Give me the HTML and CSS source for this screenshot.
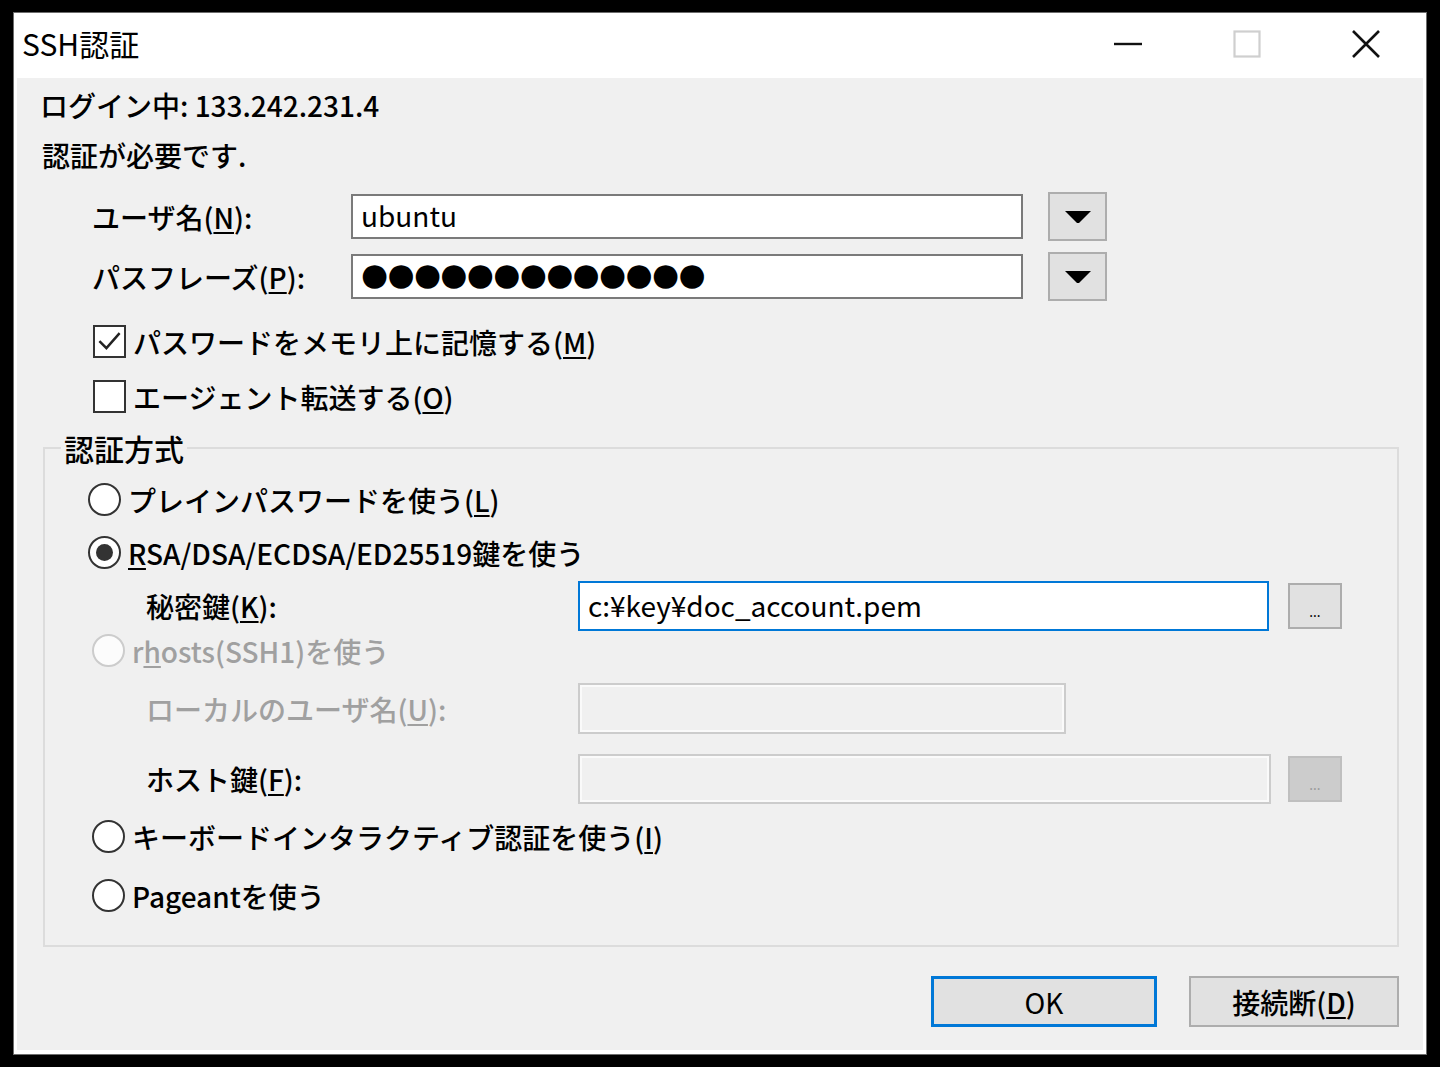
FILE: index.html
```html
<!DOCTYPE html>
<html lang="ja">
<head>
    <meta charset="UTF-8">
    <meta name="viewport" content="width=device-width, initial-scale=1.0">
    <title>SSH認証</title>
    <link rel="stylesheet" href="styles.css">
</head>
<body>
    <div class="window">
        <div class="titlebar">
            <span class="title">SSH認証</span>
            <div class="caption-btns">
                <svg class="cap-icon" viewBox="0 0 28 28"><line x1="0" y1="14" x2="28" y2="14" stroke="#111" stroke-width="2.4"/></svg>
                <svg class="cap-icon" viewBox="0 0 28 28"><rect x="1.5" y="1.5" width="25" height="25" fill="none" stroke="#cfcfcf" stroke-width="2.2"/></svg>
                <svg class="cap-icon" viewBox="0 0 28 28"><path d="M1 1 L27 27 M27 1 L1 27" stroke="#111" stroke-width="2.6" fill="none"/></svg>
            </div>
        </div>

        <div class="client">
            <p class="info">ログイン中: 133.242.231.4</p>
            <p class="info info-second">認証が必要です.</p>

            <div class="field-row row-user">
                <span class="field-label">ユーザ名(<u>N</u>):</span>
                <div class="edit edit-main">ubuntu</div>
                <button class="drop-btn">
                    <svg viewBox="0 0 28 14" width="28" height="14"><path d="M1 1 L27 1 L15 13 L13 13 Z" fill="#000"/></svg>
                </button>
            </div>
            <div class="field-row row-pass">
                <span class="field-label">パスフレーズ(<u>P</u>):</span>
                <div class="edit edit-main"><span class="dots">●●●●●●●●●●●●●</span></div>
                <button class="drop-btn">
                    <svg viewBox="0 0 28 14" width="28" height="14"><path d="M1 1 L27 1 L15 13 L13 13 Z" fill="#000"/></svg>
                </button>
            </div>

            <div class="check-row check-first">
                <span class="checkbox">
                    <svg viewBox="0 0 33 33" width="31" height="31"><path d="M5 16 L13 24 L28 7" fill="none" stroke="#222" stroke-width="2.8"/></svg>
                </span>
                <span class="opt-label">パスワードをメモリ上に記憶する(<u>M</u>)</span>
            </div>
            <div class="check-row check-second">
                <span class="checkbox"></span>
                <span class="opt-label">エージェント転送する(<u>O</u>)</span>
            </div>

            <fieldset class="group">
                <legend class="group-title">認証方式</legend>

                <div class="radio-row radio-plain">
                    <span class="radio"></span>
                    <span class="opt-label">プレインパスワードを使う(<u>L</u>)</span>
                </div>
                <div class="radio-row radio-rsa">
                    <span class="radio checked"></span>
                    <span class="opt-label"><u>R</u>SA/DSA/ECDSA/ED25519鍵を使う</span>
                </div>
                <div class="sub-row row-key">
                    <span class="sub-label">秘密鍵(<u>K</u>):</span>
                    <div class="edit edit-focus">c:¥key¥doc_account.pem</div>
                    <button class="browse-btn">...</button>
                </div>

                <div class="radio-row radio-late radio-rhosts">
                    <span class="radio disabled"></span>
                    <span class="opt-label text-disabled">r<u>h</u>osts(SSH1)を使う</span>
                </div>
                <div class="sub-row row-local">
                    <span class="sub-label text-disabled">ローカルのユーザ名(<u>U</u>):</span>
                    <div class="edit edit-disabled edit-local"></div>
                </div>
                <div class="sub-row row-host">
                    <span class="sub-label">ホスト鍵(<u>F</u>):</span>
                    <div class="edit edit-disabled edit-host"></div>
                    <button class="browse-btn browse-disabled">...</button>
                </div>

                <div class="radio-row radio-late radio-kbd">
                    <span class="radio"></span>
                    <span class="opt-label">キーボードインタラクティブ認証を使う(<u>I</u>)</span>
                </div>
                <div class="radio-row radio-late radio-pageant">
                    <span class="radio"></span>
                    <span class="opt-label">Pageantを使う</span>
                </div>
            </fieldset>

            <div class="dialog-btns">
                <button class="push-btn push-default">OK</button>
                <button class="push-btn push-cancel">接続断(<u>D</u>)</button>
            </div>
        </div>
    </div>
</body>
</html>
```

FILE: styles.css
```css
body {
    margin: 0;
    padding: 12px 13px;
    background-color: #000;
    font-family: "Noto Sans CJK JP", "Noto Sans", sans-serif;
    font-size: 28px;
    font-weight: 500;
    color: #000;
}

.window {
    box-sizing: border-box;
    width: 1414px;
    height: 1043px;
    background: #fff;
    border: 1px solid #6d6d6d;
    padding: 0 3px 4px 3px;
    display: flex;
    flex-direction: column;
}

/* タイトルバー */
.titlebar {
    height: 65px;
    display: flex;
    align-items: center;
    padding: 0 43px 0 5px;
}

.title {
    flex: 1;
    font-size: 30px;
    font-weight: 400;
    line-height: 34px;
    margin-top: -5px;
}

.caption-btns {
    display: flex;
    align-items: center;
    gap: 91px;
    margin-top: -3px;
}

.cap-icon {
    width: 28px;
    height: 28px;
    display: block;
}

.client {
    flex: 1;
    background: #f0f0f0;
    padding: 10px 24px 0 23px;
}

p.info {
    margin: 0;
    line-height: 34px;
    height: 34px;
}

.info-second {
    margin-top: 16px !important;
    padding-left: 2px;
}

/* ユーザ名・パスフレーズ */
.field-row {
    display: flex;
    align-items: center;
    height: 49px;
    padding-left: 52px;
}

.row-user {
    margin-top: 20px;
}

.row-pass {
    margin-top: 11px;
}

.field-label {
    width: 259px;
    line-height: 34px;
}

.edit {
    box-sizing: border-box;
    background: #fff;
    border: 2px solid #7a7a7a;
    line-height: 38px;
    padding: 0 8px;
    white-space: nowrap;
    overflow: hidden;
    font-weight: 400;
}

.edit-main {
    width: 672px;
    height: 45px;
    margin-right: 25px;
}

.dots {
    font-family: "DejaVu Sans", sans-serif;
    font-size: 31px;
    letter-spacing: -0.6px;
    position: relative;
    top: -2px;
}

.drop-btn {
    box-sizing: border-box;
    width: 59px;
    height: 49px;
    background: #e1e1e1;
    border: 2px solid #adadad;
    padding: 0;
    display: flex;
    align-items: center;
    justify-content: center;
}

/* チェックボックス */
.check-row {
    display: flex;
    align-items: center;
    height: 33px;
    margin-left: 53px;
}

.check-first {
    margin-top: 24px;
}

.check-second {
    margin-top: 22px;
}

.checkbox {
    box-sizing: border-box;
    width: 33px;
    height: 33px;
    border: 2px solid #333;
    background: #fff;
    display: flex;
    align-items: center;
    justify-content: center;
    margin-right: 7px;
}

.opt-label {
    line-height: 34px;
    white-space: nowrap;
}

u {
    text-underline-offset: 3px;
    text-decoration-thickness: 2px;
}

/* 認証方式 */
.group {
    margin: 18px 0 0 3px;
    padding: 0 0 33px 0;
    border: 2px solid #dcdcdc;
}

.group-title {
    margin-left: 16px;
    padding: 0 3px;
    line-height: 34px;
    font-size: 30px;
}

.radio-row {
    display: flex;
    align-items: center;
    height: 33px;
    padding-left: 43px;
}

.radio-late {
    padding-left: 47px;
}

.radio-plain {
    margin-top: 18px;
}

.radio-rsa {
    margin-top: 20px;
}

.radio-rhosts {
    margin-top: 3px;
}

.radio-kbd {
    margin-top: 16px;
}

.radio-pageant {
    margin-top: 26px;
}

.radio {
    box-sizing: border-box;
    width: 33px;
    height: 33px;
    border: 2px solid #333;
    border-radius: 50%;
    background: #fff;
    margin-right: 7px;
    display: flex;
    align-items: center;
    justify-content: center;
}

.radio.checked::after {
    content: "";
    width: 17px;
    height: 17px;
    border-radius: 50%;
    background: #333;
}

.radio.disabled {
    border-color: #cccccc;
    background: #fcfcfc;
}

.text-disabled {
    color: #a0a0a0;
}

.sub-row {
    display: flex;
    align-items: center;
    padding-left: 101px;
}

.row-key {
    height: 50px;
    margin-top: 12px;
}

.row-local {
    height: 51px;
    margin-top: 16px;
}

.row-host {
    height: 50px;
    margin-top: 20px;
}

.sub-label {
    width: 432px;
    line-height: 34px;
    white-space: nowrap;
}

.edit-focus {
    width: 691px;
    height: 50px;
    border-color: #0078d7;
    line-height: 44px;
    margin-right: 19px;
}

.edit-disabled {
    background: #f0f0f0;
    border: 2px solid #cccccc;
    box-shadow: inset 0 0 0 2px #fafafa;
}

.edit-local {
    width: 488px;
    height: 51px;
}

.edit-host {
    width: 693px;
    height: 50px;
    margin-right: 17px;
}

.browse-btn {
    box-sizing: border-box;
    width: 54px;
    height: 46px;
    background: #e1e1e1;
    border: 2px solid #adadad;
    font-family: "Noto Sans", sans-serif;
    font-size: 14px;
    padding: 10px 0 0 0;
    color: #000;
}

.browse-disabled {
    background: #cccccc;
    border-color: #bfbfbf;
    color: #9a9a9a;
}

/* ボタン */
.dialog-btns {
    display: flex;
    justify-content: flex-end;
    gap: 32px;
    margin-top: 29px;
}

.push-btn {
    box-sizing: border-box;
    height: 51px;
    background: #e1e1e1;
    border: 2px solid #adadad;
    font-family: "Noto Sans CJK JP", "Noto Sans", sans-serif;
    font-size: 28px;
    font-weight: 500;
    color: #000;
    padding: 0;
    line-height: 34px;
}

.push-default {
    width: 226px;
    border: 3px solid #0078d7;
    font-weight: 400;
}

.push-cancel {
    width: 210px;
}
```
